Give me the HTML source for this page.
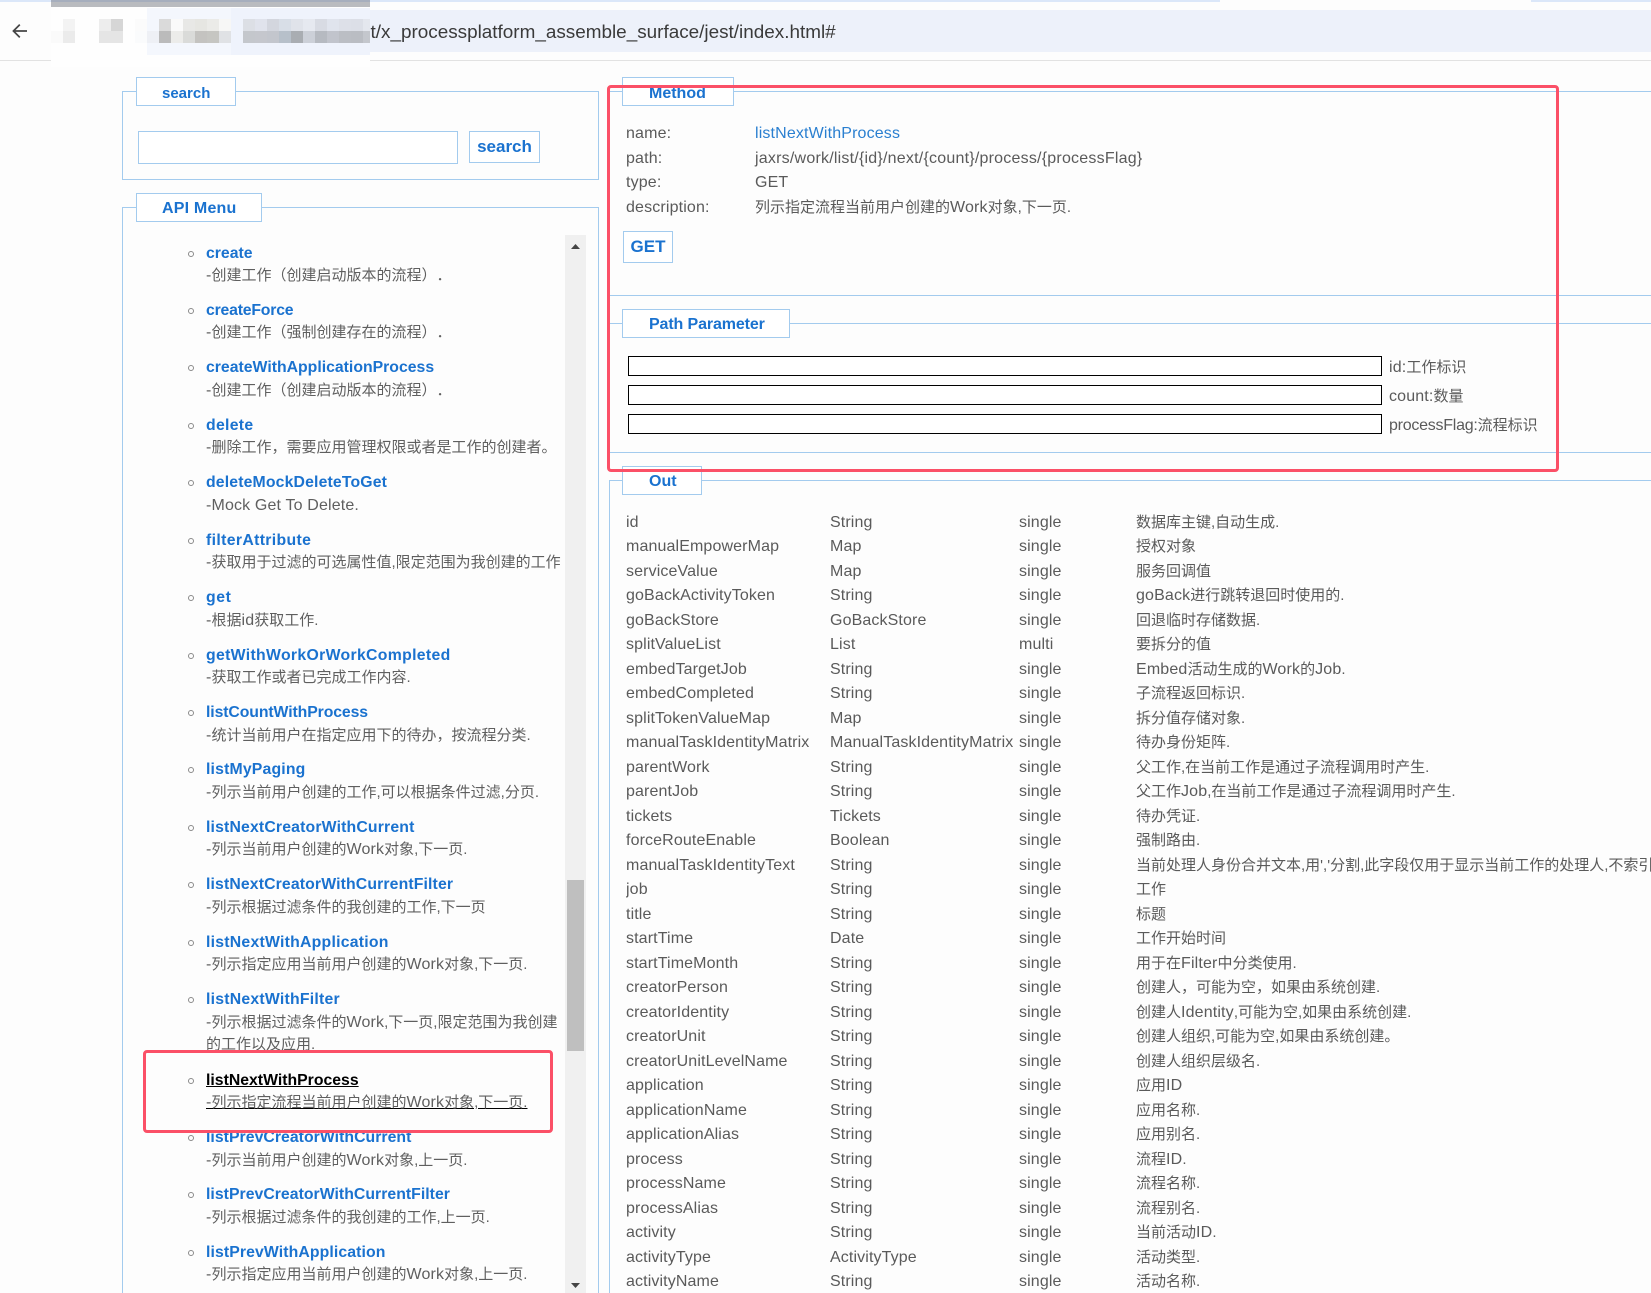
<!DOCTYPE html>
<html lang="zh">
<head>
<meta charset="utf-8">
<title>jest</title>
<style>
html,body{margin:0;padding:0;width:1651px;height:1293px;overflow:hidden;background:#fdfdfd;}
body{position:relative;font-family:"Liberation Sans","Noto Sans CJK SC",sans-serif;font-size:15px;color:#5a5a5a;text-spacing-trim:space-all;}
em{font-style:normal;font-size:16px;letter-spacing:.15px;}
.a{position:absolute;}
.t{position:absolute;line-height:20px;white-space:nowrap;}
.fs{position:absolute;box-sizing:border-box;border:1px solid #a3cbee;background:transparent;}
.r0{border-right:0;}
.b0{border-bottom:0;}
.lg{position:absolute;box-sizing:border-box;border:1px solid #a3cbee;background:#fff;color:#1a72cf;font-weight:bold;font-size:16px;line-height:30px;padding-left:25px;height:29px;white-space:nowrap;overflow:hidden;}
.btn{position:absolute;box-sizing:border-box;border:1px solid #a3cbee;background:#fff;color:#1a72cf;font-weight:bold;font-size:17px;text-align:center;white-space:nowrap;}
.pi{position:absolute;box-sizing:border-box;left:628px;width:754px;height:20px;border:1.5px solid #000;background:#fff;}
.red{position:absolute;box-sizing:border-box;border:3px solid #fb5067;border-radius:4px;}
.m i{position:absolute;top:19px;height:12px;display:block;}
.m u{position:absolute;top:31px;height:12px;display:block;}
#menu{position:absolute;left:186px;top:242.5px;width:378px;height:1050.5px;overflow:hidden;}
#menu div{position:relative;height:57.45px;padding-left:20px;}
#menu div.two{height:80.4px;}
#menu a{display:block;font-weight:bold;color:#1a72cf;line-height:22.5px;font-size:15.8px;white-space:nowrap;}
#menu p{margin:0;line-height:22.5px;color:#5f5f5f;width:358px;}
#menu p em{line-height:20px;}
#menu a::before{content:"";position:absolute;left:2px;top:8px;width:6px;height:6px;box-sizing:border-box;border:1.5px solid #8a8a8a;border-radius:50%;}
#menu a.on{color:#000;text-decoration:underline;}
#menu p.on{text-decoration:underline;text-decoration-color:#000;}
#out{position:absolute;left:626px;top:512.5px;width:1025px;height:780.5px;overflow:hidden;}
#out div{height:24.5px;line-height:20px;white-space:nowrap;}
#out span{display:inline-block;vertical-align:top;}
#out span:nth-child(1){width:204px;font-size:16px;letter-spacing:.12px;}
#out span:nth-child(2){width:189px;font-size:16px;letter-spacing:.12px;}
#out span:nth-child(3){width:117px;font-size:16px;letter-spacing:.12px;}
</style>
</head>
<body>
<!-- browser chrome -->
<div class="a" style="left:0;top:0;width:1220px;height:2px;background:#dbe7f9;"></div>
<div class="a" style="left:1531px;top:0;width:120px;height:2px;background:#dbe7f9;"></div>
<div class="a" style="left:147px;top:10px;width:1504px;height:42px;background:#edf1fa;"></div>
<div class="a" style="left:0;top:60px;width:1651px;height:1px;background:#e2e2e2;"></div>
<svg class="a" style="left:11px;top:22px;" width="18" height="18" viewBox="0 0 18 18"><path d="M16 9H2.5M8.8 2.6 2.4 9l6.4 6.4" fill="none" stroke="#454545" stroke-width="1.7"/></svg>
<div class="t" style="left:360px;top:23px;font-size:18.9px;color:#3a3a3a;">et/x_processplatform_assemble_surface/jest/index.html#</div>

<!-- mosaic -->
<div class="a m" style="left:0;top:0;width:370px;height:70px;overflow:hidden;">
<div class="a" style="left:51px;top:0;width:319px;height:67px;background:#fefefe;"></div>
<div class="a" style="left:147px;top:8px;width:223px;height:47px;background:#f4f7fd;"></div>
<div class="a" style="left:231px;top:8px;width:139px;height:47px;background:#eff3fc;"></div>
<div class="a" style="left:51px;top:0;width:319px;height:2px;background:#a6aebd;"></div>
<div class="a" style="left:51px;top:2px;width:319px;height:5px;background:#b9bbbf;"></div>
<i style="left:63px;width:12px;background:#f3f3f3"></i>
<i style="left:99px;width:12px;background:#ededed"></i>
<i style="left:111px;width:12px;background:#d6d6d6"></i>
<i style="left:135px;width:12px;background:#fbfbfb"></i>
<i style="left:159px;width:12px;background:#dadada"></i>
<i style="left:171px;width:12px;background:#fafafa"></i>
<i style="left:183px;width:12px;background:#e8e8e6"></i>
<i style="left:195px;width:12px;background:#e6e6e2"></i>
<i style="left:207px;width:12px;background:#ebebe8"></i>
<i style="left:219px;width:12px;background:#f7f7f6"></i>
<i style="left:243px;width:12px;background:#dcdfe5"></i>
<i style="left:255px;width:12px;background:#e0e3ec"></i>
<i style="left:267px;width:12px;background:#d3d6de"></i>
<i style="left:279px;width:12px;background:#d8dee7"></i>
<i style="left:291px;width:12px;background:#e0e3ea"></i>
<i style="left:303px;width:12px;background:#e6e9f0"></i>
<i style="left:315px;width:12px;background:#d8dbe3"></i>
<i style="left:327px;width:12px;background:#e0e4ed"></i>
<i style="left:339px;width:12px;background:#dde0e8"></i>
<i style="left:351px;width:12px;background:#dcdfe7"></i>
<i style="left:363px;width:7px;background:#e4e7ee"></i>
<u style="left:51px;width:12px;background:#fafafa"></u>
<u style="left:63px;width:12px;background:#ebebeb"></u>
<u style="left:99px;width:24px;background:#e5e5e5"></u>
<u style="left:135px;width:12px;background:#fafbfc"></u>
<u style="left:147px;width:12px;background:#eef0f5"></u>
<u style="left:159px;width:12px;background:#bbbbbb"></u>
<u style="left:171px;width:12px;background:#ececea"></u>
<u style="left:183px;width:12px;background:#dadbd9"></u>
<u style="left:195px;width:12px;background:#c4c3c0"></u>
<u style="left:207px;width:12px;background:#c6c6c2"></u>
<u style="left:219px;width:12px;background:#e0e2e5"></u>
<u style="left:243px;width:12px;background:#c4c7cc"></u>
<u style="left:255px;width:12px;background:#c5c7cd"></u>
<u style="left:267px;width:12px;background:#c3c6cd"></u>
<u style="left:279px;width:12px;background:#b7c0ca"></u>
<u style="left:291px;width:12px;background:#a9adb2"></u>
<u style="left:303px;width:12px;background:#ccd0d8"></u>
<u style="left:315px;width:12px;background:#b6bac1"></u>
<u style="left:327px;width:12px;background:#c1c4cc"></u>
<u style="left:339px;width:12px;background:#bbbec4"></u>
<u style="left:351px;width:12px;background:#babdc3"></u>
<u style="left:363px;width:7px;background:#c4c7cd"></u>
</div>

<!-- search -->
<div class="fs" style="left:122px;top:91px;width:477px;height:89px;"></div>
<div class="lg" style="left:136px;top:77px;width:100px;font-size:15px;line-height:32px;">search</div>
<div class="a" style="left:138px;top:131px;width:320px;height:33px;box-sizing:border-box;border:1px solid #a3cbee;background:#fff;"></div>
<div class="btn" style="left:469px;top:131px;width:71px;height:32px;line-height:30px;">search</div>

<!-- API Menu -->
<div class="fs b0" style="left:122px;top:207px;width:477px;height:1086px;"></div>
<div class="lg" style="left:136px;top:193px;width:126px;letter-spacing:.2px;">API Menu</div>

<div class="a" style="left:565px;top:235px;width:21px;height:1058px;background:#f0f0f0;"></div>
<div class="a" style="left:567px;top:880px;width:17px;height:171px;background:#bfbfbf;"></div>
<svg class="a" style="left:570px;top:243px;" width="11" height="7" viewBox="0 0 11 7"><path d="M5.5 1 10 6H1z" fill="#444"/></svg>
<svg class="a" style="left:570px;top:1282px;" width="11" height="7" viewBox="0 0 11 7"><path d="M1 1h9L5.5 6z" fill="#444"/></svg>

<div id="menu">
<div><a>create</a><p><em>-</em>创建工作（创建启动版本的流程）．</p></div>
<div><a style="letter-spacing:-.2px">createForce</a><p><em>-</em>创建工作（强制创建存在的流程）．</p></div>
<div><a>createWithApplicationProcess</a><p><em>-</em>创建工作（创建启动版本的流程）．</p></div>
<div><a style="letter-spacing:.3px">delete</a><p><em>-</em>删除工作，需要应用管理权限或者是工作的创建者。</p></div>
<div><a style="letter-spacing:.15px">deleteMockDeleteToGet</a><p><em>-Mock Get To Delete.</em></p></div>
<div><a style="letter-spacing:.35px">filterAttribute</a><p><em>-</em>获取用于过滤的可选属性值,限定范围为我创建的工作</p></div>
<div><a style="letter-spacing:.6px">get</a><p><em>-</em>根据<em>id</em>获取工作.</p></div>
<div><a style="letter-spacing:.32px">getWithWorkOrWorkCompleted</a><p><em>-</em>获取工作或者已完成工作内容.</p></div>
<div><a style="letter-spacing:-.1px">listCountWithProcess</a><p><em>-</em>统计当前用户在指定应用下的待办，按流程分类.</p></div>
<div><a style="letter-spacing:.17px">listMyPaging</a><p><em>-</em>列示当前用户创建的工作,可以根据条件过滤,分页.</p></div>
<div><a style="letter-spacing:.16px">listNextCreatorWithCurrent</a><p><em>-</em>列示当前用户创建的<em>Work</em>对象,下一页.</p></div>
<div><a style="letter-spacing:.13px">listNextCreatorWithCurrentFilter</a><p><em>-</em>列示根据过滤条件的我创建的工作,下一页</p></div>
<div><a style="letter-spacing:.24px">listNextWithApplication</a><p><em>-</em>列示指定应用当前用户创建的<em>Work</em>对象,下一页.</p></div>
<div class="two"><a style="letter-spacing:.23px">listNextWithFilter</a><p><em>-</em>列示根据过滤条件的<em>Work</em>,下一页,限定范围为我创建的工作以及应用.</p></div>
<div><a class="on">listNextWithProcess</a><p class="on"><em>-</em>列示指定流程当前用户创建的<em>Work</em>对象,下一页.</p></div>
<div><a style="letter-spacing:.04px">listPrevCreatorWithCurrent</a><p><em>-</em>列示当前用户创建的<em>Work</em>对象,上一页.</p></div>
<div><a style="letter-spacing:.03px">listPrevCreatorWithCurrentFilter</a><p><em>-</em>列示根据过滤条件的我创建的工作,上一页.</p></div>
<div style="height:45px;"><a style="letter-spacing:.1px">listPrevWithApplication</a><p><em>-</em>列示指定应用当前用户创建的<em>Work</em>对象,上一页.</p></div>
</div>

<!-- Method -->
<div class="fs r0" style="left:609px;top:91px;width:1042px;height:205px;"></div>
<div class="lg" style="left:622px;top:77px;width:112px;padding-left:26px;line-height:32px;">Method</div>
<div class="t" style="left:626px;top:124px;"><em>name:</em></div>
<div class="t" style="left:755px;top:124px;color:#2a7fd0;"><em>listNextWithProcess</em></div>
<div class="t" style="left:626px;top:149px;"><em>path:</em></div>
<div class="t" style="left:755px;top:149px;"><em style="letter-spacing:.22px">jaxrs/work/list/{id}/next/{count}/process/{processFlag}</em></div>
<div class="t" style="left:626px;top:173px;"><em>type:</em></div>
<div class="t" style="left:755px;top:173px;"><em>GET</em></div>
<div class="t" style="left:626px;top:198px;"><em>description:</em></div>
<div class="t" style="left:755px;top:198px;">列示指定流程当前用户创建的<em>Work</em>对象,下一页.</div>
<div class="btn" style="left:623px;top:231px;width:50px;height:32px;line-height:30px;">GET</div>

<!-- Path Parameter -->
<div class="fs r0" style="left:609px;top:323px;width:1042px;height:130px;"></div>
<div class="lg" style="left:622px;top:309px;width:168px;padding-left:26px;letter-spacing:-.12px;">Path Parameter</div>
<div class="pi" style="top:356px;"></div>
<div class="pi" style="top:385px;"></div>
<div class="pi" style="top:414px;"></div>
<div class="t" style="left:1389px;top:358px;"><em>id:</em>工作标识</div>
<div class="t" style="left:1389px;top:387px;"><em>count:</em>数量</div>
<div class="t" style="left:1389px;top:416px;"><em style="letter-spacing:-.25px">processFlag:</em>流程标识</div>

<!-- Out -->
<div class="fs r0 b0" style="left:609px;top:480px;width:1042px;height:813px;"></div>
<div class="lg" style="left:622px;top:466px;width:80px;padding-left:26px;">Out</div>
<div id="out">
<div><span>id</span><span>String</span><span>single</span><span>数据库主键,自动生成.</span></div>
<div><span>manualEmpowerMap</span><span>Map</span><span>single</span><span>授权对象</span></div>
<div><span>serviceValue</span><span>Map</span><span>single</span><span>服务回调值</span></div>
<div><span>goBackActivityToken</span><span>String</span><span>single</span><span><em>goBack</em>进行跳转退回时使用的.</span></div>
<div><span>goBackStore</span><span>GoBackStore</span><span>single</span><span>回退临时存储数据.</span></div>
<div><span>splitValueList</span><span>List</span><span>multi</span><span>要拆分的值</span></div>
<div><span>embedTargetJob</span><span>String</span><span>single</span><span><em>Embed</em>活动生成的<em>Work</em>的<em>Job</em>.</span></div>
<div><span>embedCompleted</span><span>String</span><span>single</span><span>子流程返回标识.</span></div>
<div><span>splitTokenValueMap</span><span>Map</span><span>single</span><span>拆分值存储对象.</span></div>
<div><span>manualTaskIdentityMatrix</span><span>ManualTaskIdentityMatrix</span><span>single</span><span>待办身份矩阵.</span></div>
<div><span>parentWork</span><span>String</span><span>single</span><span>父工作,在当前工作是通过子流程调用时产生.</span></div>
<div><span>parentJob</span><span>String</span><span>single</span><span>父工作<em>Job</em>,在当前工作是通过子流程调用时产生.</span></div>
<div><span>tickets</span><span>Tickets</span><span>single</span><span>待办凭证.</span></div>
<div><span>forceRouteEnable</span><span>Boolean</span><span>single</span><span>强制路由.</span></div>
<div><span>manualTaskIdentityText</span><span>String</span><span>single</span><span>当前处理人身份合并文本,用','分割,此字段仅用于显示当前工作的处理人,不索引.</span></div>
<div><span>job</span><span>String</span><span>single</span><span>工作</span></div>
<div><span>title</span><span>String</span><span>single</span><span>标题</span></div>
<div><span>startTime</span><span>Date</span><span>single</span><span>工作开始时间</span></div>
<div><span>startTimeMonth</span><span>String</span><span>single</span><span>用于在<em>Filter</em>中分类使用.</span></div>
<div><span>creatorPerson</span><span>String</span><span>single</span><span>创建人，可能为空，如果由系统创建.</span></div>
<div><span>creatorIdentity</span><span>String</span><span>single</span><span>创建人<em>Identity</em>,可能为空,如果由系统创建.</span></div>
<div><span>creatorUnit</span><span>String</span><span>single</span><span>创建人组织,可能为空,如果由系统创建。</span></div>
<div><span>creatorUnitLevelName</span><span>String</span><span>single</span><span>创建人组织层级名.</span></div>
<div><span>application</span><span>String</span><span>single</span><span>应用<em>ID</em></span></div>
<div><span>applicationName</span><span>String</span><span>single</span><span>应用名称.</span></div>
<div><span>applicationAlias</span><span>String</span><span>single</span><span>应用别名.</span></div>
<div><span>process</span><span>String</span><span>single</span><span>流程<em>ID</em>.</span></div>
<div><span>processName</span><span>String</span><span>single</span><span>流程名称.</span></div>
<div><span>processAlias</span><span>String</span><span>single</span><span>流程别名.</span></div>
<div><span>activity</span><span>String</span><span>single</span><span>当前活动<em>ID</em>.</span></div>
<div><span>activityType</span><span>ActivityType</span><span>single</span><span>活动类型.</span></div>
<div style="height:20px;"><span>activityName</span><span>String</span><span>single</span><span>活动名称.</span></div>
</div>

<!-- annotation boxes -->
<div class="red" style="left:607px;top:85px;width:952px;height:387px;"></div>
<div class="red" style="left:143px;top:1050px;width:410px;height:83px;"></div>
</body>
</html>
